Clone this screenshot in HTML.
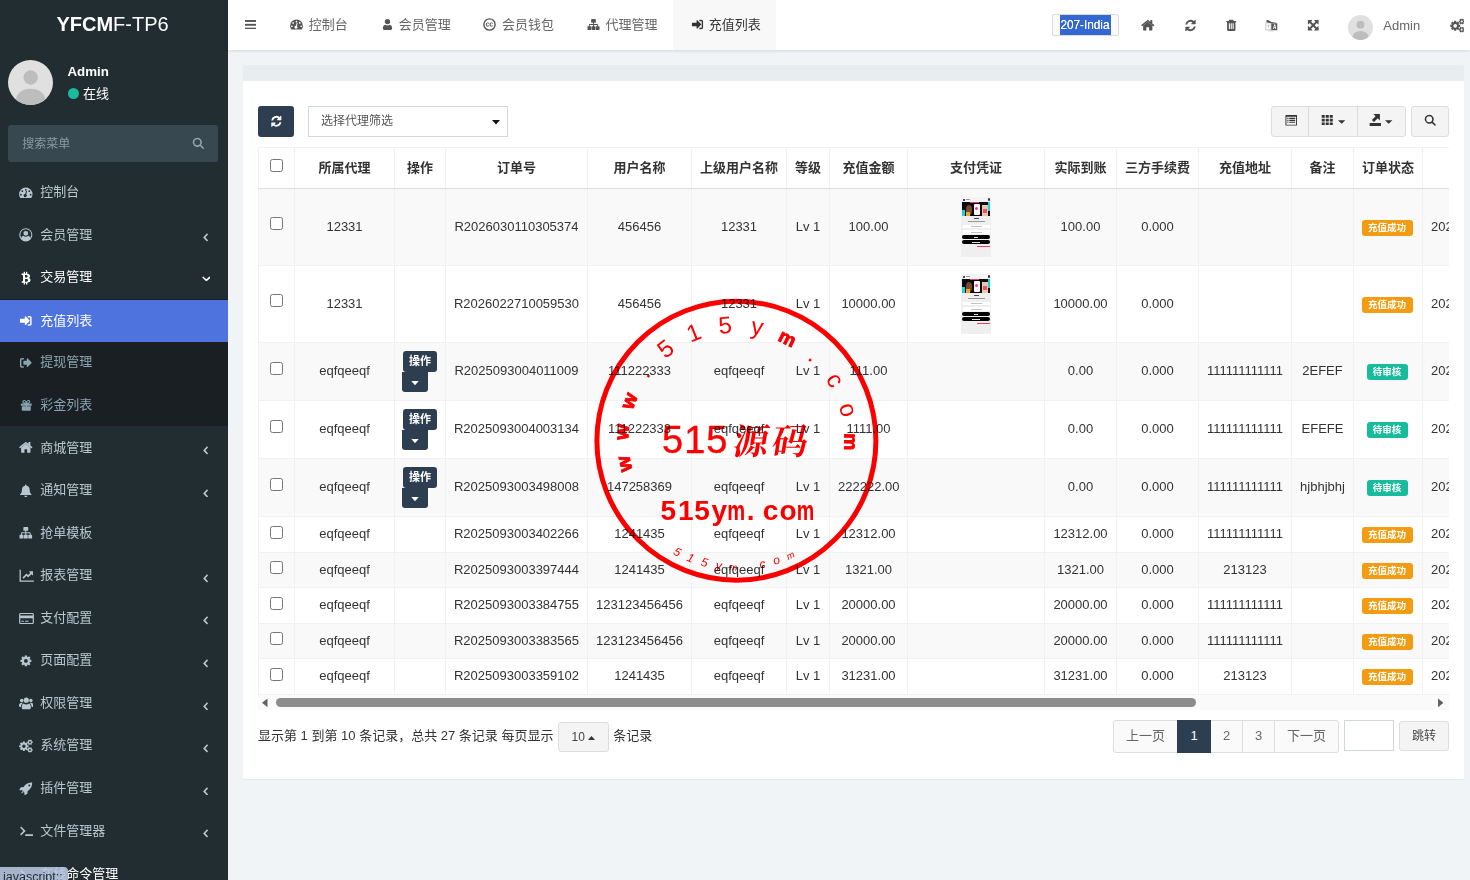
<!DOCTYPE html>
<html lang="zh-CN"><head><meta charset="utf-8"><title>充值列表</title>
<style>
*{box-sizing:border-box}
html,body{margin:0;padding:0}
body{width:1470px;height:880px;overflow:hidden;position:relative;background:#f1f4f6;font-family:"Liberation Sans","Noto Sans CJK SC",sans-serif;font-size:13px;color:#333;line-height:1.42857}
.abs{position:absolute}
.t{position:absolute;white-space:nowrap;line-height:1}
#sidebar{position:absolute;left:0;top:0;width:228px;height:880px;background:#222d32;overflow:hidden}
#header{position:absolute;left:228px;top:0;width:1242px;height:50px;background:#fff;box-shadow:0 1px 3px rgba(0,0,0,.12)}
.mi{position:absolute;left:40.2px;font-size:13px;color:#b8c7ce;white-space:nowrap;line-height:18.57px}
.tab{position:absolute;top:-0.4px;height:50px;font-size:13px;color:#666;white-space:nowrap;line-height:50px}
#card{position:absolute;left:243px;top:65px;width:1221px;height:714px;background:#fff;border-radius:2px;box-shadow:0 1px 1px rgba(0,0,0,.05)}
#cardhead{position:absolute;left:0;top:0;width:1221px;height:16px;background:#e8edf0;border-radius:1px 1px 0 0}
#tw{position:absolute;left:257.5px;top:147px;width:1191.5px;height:547.5px;overflow:hidden}
table{border-collapse:collapse;table-layout:fixed;width:1305px;font-size:13px;color:#333}
td,th{border:1px solid #f1f1f1;padding:0 8px;text-align:center;vertical-align:middle;white-space:nowrap;overflow:hidden}
th{font-weight:bold;height:41px;border-bottom:1px solid #ddd;border-top:1px solid #f1f1f1}
tr.o td{background:#f9f9f9}
tr.r77 td{height:77px}
tr.r76 td{height:77px}
tr.r58 td{height:58px}
tr.r35 td{height:35.57px}
.cb{display:inline-block;width:13px;height:13px;border:1px solid #767676;border-radius:2.5px;background:#fff;vertical-align:middle;position:relative;top:-2.5px}
.lab{display:inline-block;font-size:9.5px;font-weight:bold;color:#fff;border-radius:3px;height:16px;line-height:16px;position:relative;top:0.2px;left:-0.9px}
.lo{background:#f39c12;width:51px}
.lg{background:#18bc9c;width:41px;top:-0.5px}
tr.r58 .cb,tr.r77 .cb,tr.r76 .cb{top:-3.3px}
.pg{position:absolute;top:720px;height:32.5px;border:1px solid #ddd;background:#fafafa;color:#666;font-size:13px;text-align:center;line-height:30.5px}
</style></head><body>

<div id="sidebar">
<div class="t" style="left:0;width:228px;top:13.1px;text-align:center;font-size:20px;color:#fff;line-height:22px;padding-right:3px"><b>YFCM</b>F-TP6</div>
<svg class="abs" style="left:7.7px;top:59.9px;border-radius:50%;overflow:hidden;background:#e0e0e0" width="45.4" height="45.4" viewBox="0 0 48 48"><g fill="#bdbdbd"><circle cx="24" cy="18.5" r="7.6"/><ellipse cx="24" cy="42" rx="15.5" ry="11.5"/></g></svg>
<div class="t" style="left:67.5px;top:63.6px;font-size:13.3px;font-weight:bold;color:#fff;line-height:16px">Admin</div>
<div class="abs" style="left:67.6px;top:87.7px;width:11.6px;height:11.6px;border-radius:50%;background:#1abc9c"></div>
<div class="t" style="left:83px;top:84.5px;font-size:13px;color:#fff;line-height:18px">在线</div>
<div class="abs" style="left:7.7px;top:125.2px;width:210.3px;height:36.8px;background:#374850;border-radius:3px"></div>
<div class="t" style="left:22.2px;top:134.6px;font-size:12px;color:#8c99a0;line-height:18px">搜索菜单</div>
<svg style="position:absolute;left:192.2px;top:136.9px;" width="12.8" height="12.8" viewBox="0 0 14 14" fill="#9aa3a8"><path fill-rule="evenodd" d="M5.8.8a5 5 0 0 1 4.1 7.9l3 3c.3.3.3.8 0 1.1l-.1.1c-.3.3-.8.3-1.1 0l-3-3A5 5 0 1 1 5.8.8zm0 1.7a3.3 3.3 0 1 0 0 6.6 3.3 3.3 0 0 0 0-6.6z"/></svg>
<div class="abs" style="left:0;top:299px;width:228px;height:127.3px;background:#191f23"></div>
<div class="abs" style="left:0;top:300px;width:228px;height:41.8px;background:#4e73df"></div>
<svg style="position:absolute;left:19.4px;top:185.7px;" width="13.6" height="13.6" viewBox="0 0 14 14" fill="#b8c7ce"><path fill-rule="evenodd" d="M7 1.6A6.9 6.9 0 0 0 .1 8.5c0 1.3.4 2.6 1.1 3.6.1.2.3.3.5.3h10.6c.2 0 .4-.1.5-.3.7-1 1.1-2.3 1.1-3.6A6.9 6.9 0 0 0 7 1.6zM7 3a.9.9 0 1 1 0 1.8A.9.9 0 0 1 7 3zM3.4 4.4a.9.9 0 1 1 0 1.8.9.9 0 0 1 0-1.8zM2 8a.9.9 0 1 1 0 1.8A.9.9 0 0 1 2 8zM12 8a.9.9 0 1 1 0 1.8A.9.9 0 0 1 12 8zM10.6 4.4a.9.9 0 1 1 0 1.8.9.9 0 0 1 0-1.8zM8.3 5.3l-.9 3.3a1.6 1.6 0 1 1-1-.3l.9-3.3z"/></svg>
<div class="mi" style="top:183.1px;color:#b8c7ce">控制台</div>
<svg style="position:absolute;left:19.4px;top:228.3px;" width="13.6" height="13.6" viewBox="0 0 14 14" fill="#b8c7ce"><path fill-rule="evenodd" d="M7 .2a6.8 6.8 0 1 0 0 13.6A6.8 6.8 0 0 0 7 .2zm0 1.1a5.7 5.7 0 0 1 4.6 9.1c-.3-1.3-.9-2.2-2.2-2.4-.6.6-1.5 1-2.4 1s-1.8-.4-2.4-1c-1.3.2-1.9 1.1-2.2 2.4A5.7 5.7 0 0 1 7 1.3zM7 3a2.5 2.5 0 1 0 0 5 2.5 2.5 0 0 0 0-5z"/></svg>
<div class="mi" style="top:225.7px;color:#b8c7ce">会员管理</div>
<svg class="abs" style="left:202.8px;top:233.4px" width="5.6" height="8.8" viewBox="0 0 7 11" fill="none" stroke="#b8c7ce" stroke-width="2"><path d="M5.7 1L1.5 5.5l4.2 4.5"/></svg>
<svg style="position:absolute;left:19.1px;top:270.5px;" width="14.2" height="14.2" viewBox="0 0 14 14" fill="#fff"><path fill-rule="evenodd" d="M4.6.8h1.3v1.7h1V.8h1.3v1.8c1.6.2 2.7.9 2.7 2.3 0 1-.5 1.6-1.3 1.9 1.1.3 1.8 1 1.8 2.2 0 1.7-1.3 2.4-3.2 2.5v1.7H6.9v-1.7h-1v1.7H4.6v-1.7H2.5l.3-1.5h.8c.3 0 .4-.1.4-.4V4.4c0-.3-.2-.5-.6-.5h-.9V2.5h2.1zm1.3 3.2v2.4h.9c1 0 1.8-.3 1.8-1.2S7.8 4 6.8 4zm0 3.8V10.5h1.1c1.2 0 2-.4 2-1.3 0-1-.8-1.4-2-1.4z"/></svg>
<div class="mi" style="top:268.2px;color:#fff">交易管理</div>
<svg class="abs" style="left:201.6px;top:275.9px" width="8.8" height="5.6" viewBox="0 0 11 7" fill="none" stroke="#fff" stroke-width="2"><path d="M1 1.3l4.5 4.2L10 1.3"/></svg>
<svg style="position:absolute;left:19.4px;top:314.1px;" width="13.6" height="13.6" viewBox="0 0 14 14" fill="#fff"><path d="M6 2.8c0-.4.5-.7.8-.4l4 4c.3.3.3.7 0 1l-4 4c-.3.3-.8 0-.8-.4V9H1.5C1.2 9 1 8.8 1 8.5v-3c0-.3.2-.5.5-.5H6zM9.3 2h1.9C12.2 2 13 2.8 13 3.8v6.4c0 1-.8 1.8-1.8 1.8H9.3c-.2 0-.3-.1-.3-.3v-.9c0-.2.1-.3.3-.3h1.9c.2 0 .3-.1.3-.3V3.8c0-.2-.1-.3-.3-.3H9.3c-.2 0-.3-.1-.3-.3v-.9c0-.2.1-.3.3-.3z"/></svg>
<div class="mi" style="top:311.5px;color:#fff">充值列表</div>
<svg style="position:absolute;left:19.4px;top:355.9px;" width="13.6" height="13.6" viewBox="0 0 14 14" fill="#8aa4af"><path d="M8 2.8c0-.4.5-.7.8-.4l4 4c.3.3.3.7 0 1l-4 4c-.3.3-.8 0-.8-.4V9H5c-.3 0-.5-.2-.5-.5v-3c0-.3.2-.5.5-.5h3zM4.7 2H2.8C1.8 2 1 2.8 1 3.8v6.4c0 1 .8 1.8 1.8 1.8h1.9c.2 0 .3-.1.3-.3v-.9c0-.2-.1-.3-.3-.3H2.8c-.2 0-.3-.1-.3-.3V3.8c0-.2.1-.3.3-.3h1.9c.2 0 .3-.1.3-.3v-.9C5 2.1 4.9 2 4.7 2z"/></svg>
<div class="mi" style="top:353.3px;color:#8aa4af">提现管理</div>
<svg style="position:absolute;left:19.9px;top:399.0px;" width="12.6" height="12.6" viewBox="0 0 14 14" fill="#8aa4af"><path d="M1 5h12v2.5H1zM2 8h4.3v5H2.8c-.4 0-.8-.3-.8-.8zM7.7 8H12v4.2c0 .5-.4.8-.8.8H7.7zM6.3 5h1.4v8H6.3zM4.6 1c1 0 1.8.7 2.4 1.7C7.6 1.7 8.4 1 9.4 1c1.2 0 2 .8 2 1.9 0 1.2-1 2.1-2.3 2.1H4.9C3.6 5 2.6 4.1 2.6 2.9c0-1.1.8-1.9 2-1.9zm.1 1.3c-.5 0-.8.3-.8.7 0 .5.4.8.9.8h1.5c-.3-.8-.9-1.5-1.6-1.5zm4.6 0c-.7 0-1.3.7-1.6 1.5h1.5c.5 0 .9-.3.9-.8 0-.4-.3-.7-.8-.7z"/></svg>
<div class="mi" style="top:395.9px;color:#8aa4af">彩金列表</div>
<svg style="position:absolute;left:19.4px;top:441.1px;" width="13.6" height="13.6" viewBox="0 0 14 14" fill="#b8c7ce"><path d="M7 2.9l4.8 4v4.6c0 .3-.2.5-.5.5H8.4V8.5H5.6V12H2.7c-.3 0-.5-.2-.5-.5V6.9zM13.7 6.7l-.6.7c-.1.1-.3.1-.4 0L7 2.7 1.3 7.4c-.1.1-.3.1-.4 0l-.6-.7c-.1-.1-.1-.3 0-.4L6.4 1.2c.3-.3.9-.3 1.2 0l2.1 1.7V1.3c0-.2.1-.3.3-.3h1.4c.2 0 .3.1.3.3v3.3l2 1.7c.1.1.1.3 0 .4z"/></svg>
<div class="mi" style="top:438.5px;color:#b8c7ce">商城管理</div>
<svg class="abs" style="left:202.8px;top:446.2px" width="5.6" height="8.8" viewBox="0 0 7 11" fill="none" stroke="#b8c7ce" stroke-width="2"><path d="M5.7 1L1.5 5.5l4.2 4.5"/></svg>
<svg style="position:absolute;left:19.4px;top:483.6px;" width="13.6" height="13.6" viewBox="0 0 14 14" fill="#b8c7ce"><path d="M7 .5c.5 0 .8.3.8.8v.4c2 .4 3.2 2 3.2 4.1 0 2.6.9 3.9 1.9 4.7.3.3.1.9-.4.9H1.5c-.5 0-.7-.6-.4-.9 1-.8 1.9-2.1 1.9-4.7 0-2.1 1.2-3.7 3.2-4.1v-.4c0-.5.3-.8.8-.8zM5.4 12h3.2c0 .9-.7 1.6-1.6 1.6S5.4 12.9 5.4 12z"/></svg>
<div class="mi" style="top:481.0px;color:#b8c7ce">通知管理</div>
<svg class="abs" style="left:202.8px;top:488.7px" width="5.6" height="8.8" viewBox="0 0 7 11" fill="none" stroke="#b8c7ce" stroke-width="2"><path d="M5.7 1L1.5 5.5l4.2 4.5"/></svg>
<svg style="position:absolute;left:19.4px;top:526.2px;" width="13.6" height="13.6" viewBox="0 0 14 14" fill="#b8c7ce"><path d="M5 1h4c.3 0 .5.2.5.5v3c0 .3-.2.5-.5.5H7.5v1.5H11c.6 0 1 .4 1 1V9h1c.3 0 .5.2.5.5v3c0 .3-.2.5-.5.5h-3c-.3 0-.5-.2-.5-.5v-3c0-.3.2-.5.5-.5h1V7.5H7.5V9h1c.3 0 .5.2.5.5v3c0 .3-.2.5-.5.5h-3c-.3 0-.5-.2-.5-.5v-3c0-.3.2-.5.5-.5h1V7.5H3V9h1c.3 0 .5.2.5.5v3c0 .3-.2.5-.5.5H1c-.3 0-.5-.2-.5-.5v-3C.5 9.2.7 9 1 9h1V7.5c0-.6.4-1 1-1h3.5V5H5c-.3 0-.5-.2-.5-.5v-3c0-.3.2-.5.5-.5z"/></svg>
<div class="mi" style="top:523.6px;color:#b8c7ce">抢单模板</div>
<svg style="position:absolute;left:18.6px;top:567.9px;" width="15.2" height="15.2" viewBox="0 0 14 14" fill="#b8c7ce"><path d="M.5 1.5h1.2v10h12v1.2H.5zM12.9 3.2v3.3c0 .3-.3.4-.5.2l-1-1-2.8 2.8c-.1.1-.3.1-.4 0L6.9 7.2 4.3 9.8 3.2 8.7l3.5-3.5c.1-.1.3-.1.4 0l1.3 1.3 2-2-1-1c-.2-.2-.1-.5.2-.5h3.1c.1 0 .2.1.2.2z"/></svg>
<div class="mi" style="top:566.1px;color:#b8c7ce">报表管理</div>
<svg class="abs" style="left:202.8px;top:573.8px" width="5.6" height="8.8" viewBox="0 0 7 11" fill="none" stroke="#b8c7ce" stroke-width="2"><path d="M5.7 1L1.5 5.5l4.2 4.5"/></svg>
<svg style="position:absolute;left:18.7px;top:610.6px;" width="15.0" height="15.0" viewBox="0 0 14 14" fill="#b8c7ce"><path fill-rule="evenodd" d="M1.5 1.8h11c.8 0 1.4.6 1.4 1.4v7.6c0 .8-.6 1.4-1.4 1.4h-11c-.8 0-1.4-.6-1.4-1.4V3.2c0-.8.6-1.4 1.4-1.4zm0 1.1c-.2 0-.3.1-.3.3V4.3h11.6V3.2c0-.2-.1-.3-.3-.3zM1.2 6.7v4.1c0 .2.1.3.3.3h11c.2 0 .3-.1.3-.3V6.7zM2.3 9h2.2v1.1H2.3zm3.3 0h3.3v1.1H5.6z"/></svg>
<div class="mi" style="top:608.7px;color:#b8c7ce">支付配置</div>
<svg class="abs" style="left:202.8px;top:616.4px" width="5.6" height="8.8" viewBox="0 0 7 11" fill="none" stroke="#b8c7ce" stroke-width="2"><path d="M5.7 1L1.5 5.5l4.2 4.5"/></svg>
<svg style="position:absolute;left:20.3px;top:654.8px;" width="11.8" height="11.8" viewBox="0 0 14 14" fill="#b8c7ce"><path fill-rule="evenodd" d="M11.78 5.55 L13.47 5.71 L13.47 8.29 L11.78 8.45 L11.41 9.36 L12.49 10.67 L10.67 12.49 L9.36 11.41 L8.45 11.78 L8.29 13.47 L5.71 13.47 L5.55 11.78 L4.64 11.41 L3.33 12.49 L1.51 10.67 L2.59 9.36 L2.22 8.45 L0.53 8.29 L0.53 5.71 L2.22 5.55 L2.59 4.64 L1.51 3.33 L3.33 1.51 L4.64 2.59 L5.55 2.22 L5.71 0.53 L8.29 0.53 L8.45 2.22 L9.36 2.59 L10.67 1.51 L12.49 3.33 L11.41 4.64Z M4.7 7.00 a2.3 2.3 0 1 0 4.6 0 a2.3 2.3 0 1 0 -4.6 0Z"/></svg>
<div class="mi" style="top:651.3px;color:#b8c7ce">页面配置</div>
<svg class="abs" style="left:202.8px;top:659.0px" width="5.6" height="8.8" viewBox="0 0 7 11" fill="none" stroke="#b8c7ce" stroke-width="2"><path d="M5.7 1L1.5 5.5l4.2 4.5"/></svg>
<svg style="position:absolute;left:18.9px;top:695.9px;" width="14.6" height="14.6" viewBox="0 0 14 14" fill="#b8c7ce"><path d="M7 6.5A2.5 2.5 0 1 0 7 1.5a2.5 2.5 0 0 0 0 5zM2.6 6A1.7 1.7 0 1 0 2.6 2.6 1.7 1.7 0 0 0 2.6 6zM11.4 6a1.7 1.7 0 1 0 0-3.4 1.7 1.7 0 0 0 0 3.4zM4.3 7.2C3.2 7.6 2.7 8.8 2.7 10.4v1.1c0 .8.6 1.3 1.4 1.3h5.8c.8 0 1.4-.5 1.4-1.3v-1.1c0-1.6-.5-2.8-1.6-3.2-.7.6-1.7 1-2.7 1s-2-.4-2.7-1zM3.6 6.7C3.3 6.6 3 6.5 2.6 6.5 1 6.5 0 7.6 0 9v.6c0 .5.4.9.9.9h1c0-1.5.5-3 1.7-3.8zM10.4 6.7c1.2.8 1.7 2.3 1.7 3.8h1c.5 0 .9-.4.9-.9V9c0-1.4-1-2.5-2.6-2.5-.4 0-.7.1-1 .2z"/></svg>
<div class="mi" style="top:693.8px;color:#b8c7ce">权限管理</div>
<svg class="abs" style="left:202.8px;top:701.5px" width="5.6" height="8.8" viewBox="0 0 7 11" fill="none" stroke="#b8c7ce" stroke-width="2"><path d="M5.7 1L1.5 5.5l4.2 4.5"/></svg>
<svg style="position:absolute;left:19.4px;top:739.0px;" width="13.6" height="13.6" viewBox="0 0 14 14" fill="#b8c7ce"><path fill-rule="evenodd" d="M8.54 6.43 L9.81 6.54 L9.81 8.46 L8.54 8.57 L8.26 9.24 L9.07 10.22 L7.72 11.57 L6.74 10.76 L6.07 11.04 L5.96 12.31 L4.04 12.31 L3.93 11.04 L3.26 10.76 L2.28 11.57 L0.93 10.22 L1.74 9.24 L1.46 8.57 L0.19 8.46 L0.19 6.54 L1.46 6.43 L1.74 5.76 L0.93 4.78 L2.28 3.43 L3.26 4.24 L3.93 3.96 L4.04 2.69 L5.96 2.69 L6.07 3.96 L6.74 4.24 L7.72 3.43 L9.07 4.78 L8.26 5.76Z M3.2 7.5 a1.8 1.8 0 1 0 3.6 0 a1.8 1.8 0 1 0 -3.6 0Z M13.24 2.6 L14.1 2.65 L14.1 4.15 L13.24 4.2 L12.97 4.68 L13.35 5.45 L12.05 6.2 L11.57 5.48 L11.03 5.48 L10.55 6.2 L9.25 5.45 L9.63 4.68 L9.36 4.2 L8.5 4.15 L8.5 2.65 L9.36 2.6 L9.63 2.12 L9.25 1.35 L10.55 0.6 L11.03 1.32 L11.57 1.32 L12.05 0.6 L13.35 1.35 L12.97 2.12Z M10.3 3.4 a1.00 1.00 0 1 0 2.00 0 a1.00 1.00 0 1 0 -2.00 0Z M13.24 10.4 L14.1 10.45 L14.1 11.95 L13.24 12.00 L12.97 12.48 L13.35 13.25 L12.05 14.00 L11.57 13.28 L11.03 13.28 L10.55 14.00 L9.25 13.25 L9.63 12.48 L9.36 12.00 L8.5 11.95 L8.5 10.45 L9.36 10.4 L9.63 9.92 L9.25 9.15 L10.55 8.4 L11.03 9.12 L11.57 9.12 L12.05 8.4 L13.35 9.15 L12.97 9.92Z M10.3 11.2 a1.00 1.00 0 1 0 2.00 0 a1.00 1.00 0 1 0 -2.00 0Z"/></svg>
<div class="mi" style="top:736.4px;color:#b8c7ce">系统管理</div>
<svg class="abs" style="left:202.8px;top:744.1px" width="5.6" height="8.8" viewBox="0 0 7 11" fill="none" stroke="#b8c7ce" stroke-width="2"><path d="M5.7 1L1.5 5.5l4.2 4.5"/></svg>
<svg style="position:absolute;left:19.4px;top:781.5px;" width="13.6" height="13.6" viewBox="0 0 14 14" fill="#b8c7ce"><path fill-rule="evenodd" d="M13.5.5c.2 2.8-.7 5.3-2.9 7.4-.5.5-1.1.9-1.7 1.3l-.2 2.5c0 .2-.1.3-.2.4l-2.3 1.4c-.3.2-.6 0-.6-.3l-.1-2.5-2.2-2.2-2.5-.1c-.3 0-.5-.3-.3-.6l1.4-2.3c.1-.1.2-.2.4-.2l2.5-.2c.4-.6.8-1.2 1.3-1.7C8.2 1.2 10.7.3 13.5.5zM10.6 2.5a1 1 0 1 0 0 2 1 1 0 0 0 0-2zM3.4 9.3l1.3 1.3-2.6 1.3z"/></svg>
<div class="mi" style="top:778.9px;color:#b8c7ce">插件管理</div>
<svg class="abs" style="left:202.8px;top:786.6px" width="5.6" height="8.8" viewBox="0 0 7 11" fill="none" stroke="#b8c7ce" stroke-width="2"><path d="M5.7 1L1.5 5.5l4.2 4.5"/></svg>
<svg style="position:absolute;left:18.9px;top:823.7px;" width="14.5" height="14.5" viewBox="0 0 14 14" fill="#b8c7ce"><path d="M1.2 3.3l.7-.7c.1-.1.3-.1.4 0l3.9 3.9c.1.1.1.3 0 .4L2.3 10.8c-.1.1-.3.1-.4 0l-.7-.7c-.1-.1-.1-.3 0-.4l3-3-3-3c-.1-.1-.1-.3 0-.4zM6.3 10h7c.2 0 .3.1.3.3v.9c0 .2-.1.3-.3.3h-7c-.2 0-.3-.1-.3-.3v-.9c0-.2.1-.3.3-.3z"/></svg>
<div class="mi" style="top:821.5px;color:#b8c7ce">文件管理器</div>
<svg class="abs" style="left:202.8px;top:829.2px" width="5.6" height="8.8" viewBox="0 0 7 11" fill="none" stroke="#b8c7ce" stroke-width="2"><path d="M5.7 1L1.5 5.5l4.2 4.5"/></svg>
<svg style="position:absolute;left:18.9px;top:867.2px;" width="14.5" height="14.5" viewBox="0 0 14 14" fill="#fff"><path d="M1.2 3.3l.7-.7c.1-.1.3-.1.4 0l3.9 3.9c.1.1.1.3 0 .4L2.3 10.8c-.1.1-.3.1-.4 0l-.7-.7c-.1-.1-.1-.3 0-.4l3-3-3-3c-.1-.1-.1-.3 0-.4zM6.3 10h7c.2 0 .3.1.3.3v.9c0 .2-.1.3-.3.3h-7c-.2 0-.3-.1-.3-.3v-.9c0-.2.1-.3.3-.3z"/></svg>
<div class="mi" style="top:865.1px;color:#fff">在线命令管理</div>
<div class="abs" style="left:-3px;top:867px;width:71px;height:16px;background:#b5c3dc;border-radius:0 4px 0 0;opacity:.9"></div>
<div class="t" style="left:3px;top:870px;font-size:12.5px;color:#1f2a33;line-height:14px">javascript:;</div>
</div>
<div id="header">
<svg class="abs" style="left:16.7px;top:19.5px" width="11.6" height="9.6" viewBox="0 0 11.6 9.6" fill="#555"><rect x="0" y="0" width="11.6" height="1.9"/><rect x="0" y="3.85" width="11.6" height="1.9"/><rect x="0" y="7.7" width="11.6" height="1.9"/></svg>
<div class="abs" style="left:445.0px;top:0;width:103.3px;height:50px;background:#f8f8f8"></div>
<svg style="position:absolute;left:61.7px;top:18.3px;" width="13.0" height="13.0" viewBox="0 0 14 14" fill="#555"><path fill-rule="evenodd" d="M7 1.6A6.9 6.9 0 0 0 .1 8.5c0 1.3.4 2.6 1.1 3.6.1.2.3.3.5.3h10.6c.2 0 .4-.1.5-.3.7-1 1.1-2.3 1.1-3.6A6.9 6.9 0 0 0 7 1.6zM7 3a.9.9 0 1 1 0 1.8A.9.9 0 0 1 7 3zM3.4 4.4a.9.9 0 1 1 0 1.8.9.9 0 0 1 0-1.8zM2 8a.9.9 0 1 1 0 1.8A.9.9 0 0 1 2 8zM12 8a.9.9 0 1 1 0 1.8A.9.9 0 0 1 12 8zM10.6 4.4a.9.9 0 1 1 0 1.8.9.9 0 0 1 0-1.8zM8.3 5.3l-.9 3.3a1.6 1.6 0 1 1-1-.3l.9-3.3z"/></svg>
<div class="tab" style="left:80.8px;color:#666">控制台</div>
<svg style="position:absolute;left:152.5px;top:18.3px;" width="13.0" height="13.0" viewBox="0 0 14 14" fill="#555"><path d="M7 6.8a2.9 2.9 0 1 0 0-5.8 2.9 2.9 0 0 0 0 5.8zM9.3 7.2c-.7.5-1.4.8-2.3.8s-1.6-.3-2.3-.8C2.7 7.5 2 9.3 2 11.1 2 12.3 2.8 13 3.9 13h6.2c1.1 0 1.9-.7 1.9-1.9 0-1.8-.7-3.6-2.7-3.9z"/></svg>
<div class="tab" style="left:170.8px;color:#666">会员管理</div>
<svg style="position:absolute;left:255.4px;top:18.3px;" width="13.0" height="13.0" viewBox="0 0 14 14" fill="#555"><path fill-rule="evenodd" d="M7 .2a6.8 6.8 0 1 0 0 13.6A6.8 6.8 0 0 0 7 .2zm0 1.5a5.3 5.3 0 1 1 0 10.6A5.3 5.3 0 0 1 7 1.7zM5.3 4.8C4 4.8 3 5.7 3 7s1 2.2 2.3 2.2c.8 0 1.4-.4 1.7-.9l-.8-.5c-.2.3-.5.5-.9.5-.7 0-1.1-.5-1.1-1.3s.4-1.3 1.1-1.3c.4 0 .7.2.8.5l.9-.5c-.3-.6-.9-.9-1.7-.9zm4 0C8 4.8 7 5.7 7 7s1 2.2 2.3 2.2c.8 0 1.4-.4 1.7-.9l-.8-.5c-.2.3-.5.5-.9.5-.7 0-1.1-.5-1.1-1.3s.4-1.3 1.1-1.3c.4 0 .7.2.8.5l.9-.5c-.3-.6-.9-.9-1.7-.9z"/></svg>
<div class="tab" style="left:274.0px;color:#666">会员钱包</div>
<svg style="position:absolute;left:358.7px;top:18.3px;" width="13.0" height="13.0" viewBox="0 0 14 14" fill="#555"><path d="M5 1h4c.3 0 .5.2.5.5v3c0 .3-.2.5-.5.5H7.5v1.5H11c.6 0 1 .4 1 1V9h1c.3 0 .5.2.5.5v3c0 .3-.2.5-.5.5h-3c-.3 0-.5-.2-.5-.5v-3c0-.3.2-.5.5-.5h1V7.5H7.5V9h1c.3 0 .5.2.5.5v3c0 .3-.2.5-.5.5h-3c-.3 0-.5-.2-.5-.5v-3c0-.3.2-.5.5-.5h1V7.5H3V9h1c.3 0 .5.2.5.5v3c0 .3-.2.5-.5.5H1c-.3 0-.5-.2-.5-.5v-3C.5 9.2.7 9 1 9h1V7.5c0-.6.4-1 1-1h3.5V5H5c-.3 0-.5-.2-.5-.5v-3c0-.3.2-.5.5-.5z"/></svg>
<div class="tab" style="left:377.5px;color:#666">代理管理</div>
<svg style="position:absolute;left:462.5px;top:18.3px;" width="13.0" height="13.0" viewBox="0 0 14 14" fill="#333"><path d="M6 2.8c0-.4.5-.7.8-.4l4 4c.3.3.3.7 0 1l-4 4c-.3.3-.8 0-.8-.4V9H1.5C1.2 9 1 8.8 1 8.5v-3c0-.3.2-.5.5-.5H6zM9.3 2h1.9C12.2 2 13 2.8 13 3.8v6.4c0 1-.8 1.8-1.8 1.8H9.3c-.2 0-.3-.1-.3-.3v-.9c0-.2.1-.3.3-.3h1.9c.2 0 .3-.1.3-.3V3.8c0-.2-.1-.3-.3-.3H9.3c-.2 0-.3-.1-.3-.3v-.9c0-.2.1-.3.3-.3z"/></svg>
<div class="tab" style="left:480.8px;color:#333">充值列表</div>
<div class="abs" style="left:824.2px;top:14.3px;width:66.6px;height:21.6px;border:1px solid #dadada;border-radius:2px;background:#fafafa"></div>
<div class="abs" style="left:832.0px;top:15px;width:51px;height:19.7px;background:#3367d1"></div>
<div class="t" style="left:827.4px;top:17.2px;width:60px;text-align:center;font-size:13.3px;color:#fff;line-height:16px;transform:scaleX(.885);transform-origin:30px 0;text-shadow:0 0 .4px #fff">207-India</div>
<svg style="position:absolute;left:913.2px;top:19.1px;" width="13.5" height="13.5" viewBox="0 0 14 14" fill="#555"><path d="M7 2.9l4.8 4v4.6c0 .3-.2.5-.5.5H8.4V8.5H5.6V12H2.7c-.3 0-.5-.2-.5-.5V6.9zM13.7 6.7l-.6.7c-.1.1-.3.1-.4 0L7 2.7 1.3 7.4c-.1.1-.3.1-.4 0l-.6-.7c-.1-.1-.1-.3 0-.4L6.4 1.2c.3-.3.9-.3 1.2 0l2.1 1.7V1.3c0-.2.1-.3.3-.3h1.4c.2 0 .3.1.3.3v3.3l2 1.7c.1.1.1.3 0 .4z"/></svg>
<svg style="position:absolute;left:955.7px;top:18.7px;" width="13.0" height="13.0" viewBox="0 0 14 14" fill="#555"><path d="M12.6 1.3v3.9c0 .3-.2.5-.5.5H8.2c-.4 0-.6-.5-.3-.8l1.2-1.2A3.6 3.6 0 0 0 3.5 6H1.4A5.7 5.7 0 0 1 10.6 2.2l1.2-1.2c.3-.3.8-.1.8.3zM1.4 12.7V8.8c0-.3.2-.5.5-.5h3.9c.4 0 .6.5.3.8L4.9 10.3A3.6 3.6 0 0 0 10.5 8h2.1a5.7 5.7 0 0 1-9.2 3.8L2.2 13c-.3.3-.8.1-.8-.3z"/></svg>
<svg style="position:absolute;left:996.8px;top:18.9px;" width="12.5" height="12.5" viewBox="0 0 14 14" fill="#555"><path fill-rule="evenodd" d="M5.2.8h3.6c.2 0 .4.1.5.3l.4 1h2.6c.2 0 .3.1.3.3v.8c0 .2-.1.3-.3.3h-.6v8.3c0 .9-.6 1.5-1.4 1.5H3.7c-.8 0-1.4-.6-1.4-1.5V3.5h-.6c-.2 0-.3-.1-.3-.3v-.8c0-.2.1-.3.3-.3h2.6l.4-1c.1-.2.3-.3.5-.3zM4.3 5v6c0 .2.1.3.3.3h.6c.2 0 .3-.1.3-.3V5c0-.2-.1-.3-.3-.3h-.6c-.2 0-.3.1-.3.3zm2.1 0v6c0 .2.1.3.3.3h.6c.2 0 .3-.1.3-.3V5c0-.2-.1-.3-.3-.3h-.6c-.2 0-.3.1-.3.3zm2.1 0v6c0 .2.1.3.3.3h.6c.2 0 .3-.1.3-.3V5c0-.2-.1-.3-.3-.3h-.6c-.2 0-.3.1-.3.3z"/></svg>
<svg style="position:absolute;left:1037.3px;top:18.7px;" width="13.0" height="13.0" viewBox="0 0 14 14" fill="#555"><path fill-rule="evenodd" opacity=".45" d="M.6 3.8h6.2v8.2H.6zM1.3 4.5v6.8h4.8V4.5zM2.6 6.2h2.4v.7h-.8v2.9h-.8V6.9h-.8zM3.6 12.7h4.8v.5H3.6z"/><path fill-rule="evenodd" d="M6.8 4.2h6.4v7.8H6.8zM8.7 10.8l1.2-5.2h1l1.2 5.2h-.9l-.25-1.2H9.85l-.25 1.2zM10 8.8h.8l-.4-1.9zM1.6 1h1.5l4 2.3 6.1.9v.4H6.6L1.6 3.6z"/></svg>
<svg style="position:absolute;left:1078.5px;top:18.9px;" width="12.5" height="12.5" viewBox="0 0 14 14" fill="#555"><path d="M8.5 1h4c.3 0 .5.2.5.5v4c0 .4-.5.6-.8.3l-1.2-1.2L8.6 7l2.4 2.4 1.2-1.2c.3-.3.8-.1.8.3v4c0 .3-.2.5-.5.5h-4c-.4 0-.6-.5-.3-.8l1.2-1.2L7 8.6 4.6 11l1.2 1.2c.3.3.1.8-.3.8h-4c-.3 0-.5-.2-.5-.5v-4c0-.4.5-.6.8-.3L3 9.4 5.4 7 3 4.6 1.8 5.8c-.3.3-.8.1-.8-.3v-4c0-.3.2-.5.5-.5h4c.4 0 .6.5.3.8L4.6 3 7 5.4 9.4 3 8.2 1.8c-.3-.3-.1-.8.3-.8z"/></svg>
<svg class="abs" style="left:1120.0px;top:14.8px;border-radius:50%;overflow:hidden;background:#e0e0e0" width="25.0" height="25.0" viewBox="0 0 48 48"><g fill="#bdbdbd"><circle cx="24" cy="18.5" r="7.6"/><ellipse cx="24" cy="42" rx="15.5" ry="11.5"/></g></svg>
<div class="t" style="left:1155.3px;top:18px;font-size:13px;color:#666;line-height:15px">Admin</div>
<svg style="position:absolute;left:1221.8px;top:18.1px;" width="14.5" height="14.5" viewBox="0 0 14 14" fill="#555"><path fill-rule="evenodd" d="M8.54 6.43 L9.81 6.54 L9.81 8.46 L8.54 8.57 L8.26 9.24 L9.07 10.22 L7.72 11.57 L6.74 10.76 L6.07 11.04 L5.96 12.31 L4.04 12.31 L3.93 11.04 L3.26 10.76 L2.28 11.57 L0.93 10.22 L1.74 9.24 L1.46 8.57 L0.19 8.46 L0.19 6.54 L1.46 6.43 L1.74 5.76 L0.93 4.78 L2.28 3.43 L3.26 4.24 L3.93 3.96 L4.04 2.69 L5.96 2.69 L6.07 3.96 L6.74 4.24 L7.72 3.43 L9.07 4.78 L8.26 5.76Z M3.2 7.5 a1.8 1.8 0 1 0 3.6 0 a1.8 1.8 0 1 0 -3.6 0Z M13.24 2.6 L14.1 2.65 L14.1 4.15 L13.24 4.2 L12.97 4.68 L13.35 5.45 L12.05 6.2 L11.57 5.48 L11.03 5.48 L10.55 6.2 L9.25 5.45 L9.63 4.68 L9.36 4.2 L8.5 4.15 L8.5 2.65 L9.36 2.6 L9.63 2.12 L9.25 1.35 L10.55 0.6 L11.03 1.32 L11.57 1.32 L12.05 0.6 L13.35 1.35 L12.97 2.12Z M10.3 3.4 a1.00 1.00 0 1 0 2.00 0 a1.00 1.00 0 1 0 -2.00 0Z M13.24 10.4 L14.1 10.45 L14.1 11.95 L13.24 12.00 L12.97 12.48 L13.35 13.25 L12.05 14.00 L11.57 13.28 L11.03 13.28 L10.55 14.00 L9.25 13.25 L9.63 12.48 L9.36 12.00 L8.5 11.95 L8.5 10.45 L9.36 10.4 L9.63 9.92 L9.25 9.15 L10.55 8.4 L11.03 9.12 L11.57 9.12 L12.05 8.4 L13.35 9.15 L12.97 9.92Z M10.3 11.2 a1.00 1.00 0 1 0 2.00 0 a1.00 1.00 0 1 0 -2.00 0Z"/></svg>
</div>
<div id="card"><div id="cardhead"></div></div>
<div class="abs" style="left:258px;top:106.2px;width:36px;height:30.4px;background:#2c3e50;border-radius:3px"></div>
<svg style="position:absolute;left:269.9px;top:115.0px;" width="12.6" height="12.6" viewBox="0 0 14 14" fill="#fff"><path d="M12.6 1.3v3.9c0 .3-.2.5-.5.5H8.2c-.4 0-.6-.5-.3-.8l1.2-1.2A3.6 3.6 0 0 0 3.5 6H1.4A5.7 5.7 0 0 1 10.6 2.2l1.2-1.2c.3-.3.8-.1.8.3zM1.4 12.7V8.8c0-.3.2-.5.5-.5h3.9c.4 0 .6.5.3.8L4.9 10.3A3.6 3.6 0 0 0 10.5 8h2.1a5.7 5.7 0 0 1-9.2 3.8L2.2 13c-.3.3-.8.1-.8-.3z"/></svg>
<div class="abs" style="left:308px;top:106.2px;width:200px;height:30.4px;border:1px solid #d2d6de;background:#fff"></div>
<div class="t" style="left:321px;top:113px;font-size:12px;color:#555;line-height:16px">选择代理筛选</div>
<svg class="abs" style="left:491.5px;top:119.5px" width="8" height="5" viewBox="0 0 8 5"><path d="M0 0h8L4 4.5z" fill="#111"/></svg>
<div class="abs" style="left:1271.3px;top:106.2px;width:134.4px;height:30.4px;border:1px solid #ddd;background:#f4f4f4;border-radius:3px"></div>
<div class="abs" style="left:1308px;top:106.2px;width:1px;height:30.4px;background:#ddd"></div>
<div class="abs" style="left:1357px;top:106.2px;width:1px;height:30.4px;background:#ddd"></div>
<div class="abs" style="left:1411.2px;top:106.2px;width:37.6px;height:30.4px;border:1px solid #ddd;background:#f4f4f4;border-radius:3px"></div>
<svg style="position:absolute;left:1284.5px;top:114.0px;" width="12.5" height="12.5" viewBox="0 0 14 14" fill="#333"><path fill-rule="evenodd" d="M1.2 1h11.6c.4 0 .7.3.7.7v10.6c0 .4-.3.7-.7.7H1.2c-.4 0-.7-.3-.7-.7V1.7c0-.4.3-.7.7-.7zm.4 2.2v8.7h10.8V3.2zM2.6 4.3h1.3v1.2H2.6zm2.2 0h6.6v1.2H4.8zM2.6 6.5h1.3v1.2H2.6zm2.2 0h6.6v1.2H4.8zM2.6 8.7h1.3v1.2H2.6zm2.2 0h6.6v1.2H4.8z"/></svg>
<svg style="position:absolute;left:1320.5px;top:114.2px;" width="12.5" height="12.5" viewBox="0 0 14 14" fill="#333"><path d="M.8 1.2h3.4v3H.8zM5.3 1.2h3.4v3H5.3zM9.8 1.2h3.4v3H9.8zM.8 5.3h3.4v3H.8zM5.3 5.3h3.4v3H5.3zM9.8 5.3h3.4v3H9.8zM.8 9.4h3.4v3H.8zM5.3 9.4h3.4v3H5.3zM9.8 9.4h3.4v3H9.8z"/></svg>
<svg class="abs" style="left:1337.6px;top:120px" width="7.4" height="4" viewBox="0 0 8 4"><path d="M0 0h8L4 4z" fill="#333"/></svg>
<svg style="position:absolute;left:1369.2px;top:114.0px;" width="12.5" height="12.5" viewBox="0 0 14 14" fill="#333"><path d="M5 0h7.2v7.2L9.8 4.8 5.6 9 3.2 6.6 7.4 2.4zM.7 10.2h12.7v3.2H.7z"/></svg>
<svg class="abs" style="left:1385.4px;top:120px" width="7.4" height="4" viewBox="0 0 8 4"><path d="M0 0h8L4 4z" fill="#333"/></svg>
<svg style="position:absolute;left:1423.9px;top:114.1px;" width="12.6" height="12.6" viewBox="0 0 14 14" fill="#333"><path fill-rule="evenodd" d="M5.8.8a5 5 0 0 1 4.1 7.9l3 3c.3.3.3.8 0 1.1l-.1.1c-.3.3-.8.3-1.1 0l-3-3A5 5 0 1 1 5.8.8zm0 1.7a3.3 3.3 0 1 0 0 6.6 3.3 3.3 0 0 0 0-6.6z"/></svg>
<div id="tw"><table><colgroup><col style="width:36.5px"><col style="width:100px"><col style="width:51px"><col style="width:142px"><col style="width:104px"><col style="width:95px"><col style="width:43px"><col style="width:78px"><col style="width:137px"><col style="width:72px"><col style="width:82px"><col style="width:93px"><col style="width:62px"><col style="width:69px"><col style="width:140.5px"></colgroup>
<thead><tr><th style="padding:0"><span class="cb"></span></th><th>所属代理</th><th>操作</th><th>订单号</th><th>用户名称</th><th style="padding:0">上级用户名称</th><th>等级</th><th>充值金额</th><th>支付凭证</th><th>实际到账</th><th style="padding:0">三方手续费</th><th>充值地址</th><th>备注</th><th>订单状态</th><th>创建时间</th></tr></thead><tbody>
<tr class="r76 o"><td style="padding:0"><span class="cb"></span></td><td>12331</td><td style="padding:0"></td><td style="padding:0">R2026030110305374</td><td style="padding:0">456456</td><td>12331</td><td>Lv 1</td><td>100.00</td><td style="padding:0"><div style="position:relative;width:30px;height:60px;background:#efefef;margin:0 auto;overflow:hidden"><div class="abs" style="left:0;top:0;width:30px;height:4.5px;background:#f4f4f4"></div><div class="abs" style="left:1.5px;top:1.5px;width:2px;height:2px;background:#446"></div><div class="abs" style="left:4.5px;top:2px;width:4px;height:1px;background:#999"></div><div class="abs" style="left:26.5px;top:1px;width:2.5px;height:2.5px;border-radius:50%;background:#333"></div><div class="abs" style="left:1px;top:4.5px;width:28px;height:14.3px;background:#0b0b0d"></div><div class="abs" style="left:1px;top:13px;width:3px;height:5.8px;background:#19d3e0"></div><div class="abs" style="left:26.5px;top:5px;width:2.5px;height:9px;background:#19d3e0"></div><div class="abs" style="left:9px;top:4.5px;width:9px;height:1.5px;background:#e8407a"></div><div class="abs" style="left:4.5px;top:7.5px;width:6.5px;height:10px;border-radius:45%;background:#7a4a2e"></div><div class="abs" style="left:4.5px;top:15px;width:4px;height:3.8px;background:#f5a623"></div><div class="abs" style="left:12.5px;top:7px;width:6px;height:11px;background:#fafafa;border-radius:1px"></div><div class="abs" style="left:14px;top:10px;width:3px;height:3px;border-radius:50%;background:#f0506e"></div><div class="abs" style="left:20.5px;top:7.5px;width:6px;height:11.3px;background:#e7c9a5"></div><div class="abs" style="left:22px;top:12px;width:3.5px;height:4px;background:#f0506e"></div><div class="abs" style="left:12.5px;top:21.3px;width:5px;height:1.2px;background:#444"></div><div class="abs" style="left:6.5px;top:24px;width:17px;height:1px;background:#999"></div><div class="abs" style="left:1.5px;top:27.6px;width:27.5px;height:3.9px;background:#fff"></div><div class="abs" style="left:9.5px;top:29.2px;width:11px;height:.8px;background:#b9c4d0"></div><div class="abs" style="left:1.5px;top:33.1px;width:27.5px;height:3.7px;background:#fff"></div><div class="abs" style="left:9.5px;top:34.6px;width:11px;height:.8px;background:#b9c4d0"></div><div class="abs" style="left:1px;top:38.3px;width:28px;height:3.6px;background:#000;border-radius:2px"></div><div class="abs" style="left:13px;top:39.8px;width:4px;height:.7px;background:#ddd"></div><div class="abs" style="left:1px;top:43.2px;width:28px;height:3.6px;background:#000;border-radius:2px"></div><div class="abs" style="left:11px;top:44.7px;width:8px;height:.7px;background:#ddd"></div><div class="abs" style="left:16px;top:48.5px;width:12.5px;height:1.2px;background:#f23d5c"></div></div></td><td>100.00</td><td>0.000</td><td style="padding:0"></td><td style="padding:0"></td><td style="padding:0"><span class="lab lo">充值成功</span></td><td style="text-align:left">2026-03-01 10:30:53</td></tr>
<tr class="r77"><td style="padding:0"><span class="cb"></span></td><td>12331</td><td style="padding:0"></td><td style="padding:0">R2026022710059530</td><td style="padding:0">456456</td><td>12331</td><td>Lv 1</td><td>10000.00</td><td style="padding:0"><div style="position:relative;width:30px;height:60px;background:#efefef;margin:0 auto;overflow:hidden"><div class="abs" style="left:0;top:0;width:30px;height:4.5px;background:#f4f4f4"></div><div class="abs" style="left:1.5px;top:1.5px;width:2px;height:2px;background:#446"></div><div class="abs" style="left:4.5px;top:2px;width:4px;height:1px;background:#999"></div><div class="abs" style="left:26.5px;top:1px;width:2.5px;height:2.5px;border-radius:50%;background:#333"></div><div class="abs" style="left:1px;top:4.5px;width:28px;height:14.3px;background:#0b0b0d"></div><div class="abs" style="left:1px;top:13px;width:3px;height:5.8px;background:#19d3e0"></div><div class="abs" style="left:26.5px;top:5px;width:2.5px;height:9px;background:#19d3e0"></div><div class="abs" style="left:9px;top:4.5px;width:9px;height:1.5px;background:#e8407a"></div><div class="abs" style="left:4.5px;top:7.5px;width:6.5px;height:10px;border-radius:45%;background:#7a4a2e"></div><div class="abs" style="left:4.5px;top:15px;width:4px;height:3.8px;background:#f5a623"></div><div class="abs" style="left:12.5px;top:7px;width:6px;height:11px;background:#fafafa;border-radius:1px"></div><div class="abs" style="left:14px;top:10px;width:3px;height:3px;border-radius:50%;background:#f0506e"></div><div class="abs" style="left:20.5px;top:7.5px;width:6px;height:11.3px;background:#e7c9a5"></div><div class="abs" style="left:22px;top:12px;width:3.5px;height:4px;background:#f0506e"></div><div class="abs" style="left:12.5px;top:21.3px;width:5px;height:1.2px;background:#444"></div><div class="abs" style="left:6.5px;top:24px;width:17px;height:1px;background:#999"></div><div class="abs" style="left:1.5px;top:27.6px;width:27.5px;height:3.9px;background:#fff"></div><div class="abs" style="left:9.5px;top:29.2px;width:11px;height:.8px;background:#b9c4d0"></div><div class="abs" style="left:1.5px;top:33.1px;width:27.5px;height:3.7px;background:#fff"></div><div class="abs" style="left:9.5px;top:34.6px;width:11px;height:.8px;background:#b9c4d0"></div><div class="abs" style="left:1px;top:38.3px;width:28px;height:3.6px;background:#000;border-radius:2px"></div><div class="abs" style="left:13px;top:39.8px;width:4px;height:.7px;background:#ddd"></div><div class="abs" style="left:1px;top:43.2px;width:28px;height:3.6px;background:#000;border-radius:2px"></div><div class="abs" style="left:11px;top:44.7px;width:8px;height:.7px;background:#ddd"></div><div class="abs" style="left:16px;top:48.5px;width:12.5px;height:1.2px;background:#f23d5c"></div></div></td><td>10000.00</td><td>0.000</td><td style="padding:0"></td><td style="padding:0"></td><td style="padding:0"><span class="lab lo">充值成功</span></td><td style="text-align:left">2026-02-27 10:05:09</td></tr>
<tr class="r58 o"><td style="padding:0"><span class="cb"></span></td><td>eqfqeeqf</td><td style="padding:0"><div style="position:relative;width:36px;height:41px;margin:0 auto;left:-0.5px"><div class="abs" style="left:1.5px;top:0;width:34px;height:21px;background:#2c3e50;border-radius:3px;color:#fff;font-size:11px;font-weight:bold;line-height:20px;text-align:center">操作</div><div class="abs" style="left:0;top:21px;width:26px;height:20px;background:#2c3e50;border-radius:0 0 3px 3px"><svg class="abs" style="left:9.6px;top:9.3px" width="8" height="4.2" viewBox="0 0 7 4"><path d="M0 0h7L3.5 4z" fill="#fff"/></svg></div></div></td><td style="padding:0">R2025093004011009</td><td style="padding:0">111222333</td><td>eqfqeeqf</td><td>Lv 1</td><td>111.00</td><td style="padding:0"></td><td>0.00</td><td>0.000</td><td style="padding:0">111111111111</td><td style="padding:0">2EFEF</td><td style="padding:0"><span class="lab lg">待审核</span></td><td style="text-align:left">2025-09-30 04:01:10</td></tr>
<tr class="r58"><td style="padding:0"><span class="cb"></span></td><td>eqfqeeqf</td><td style="padding:0"><div style="position:relative;width:36px;height:41px;margin:0 auto;left:-0.5px"><div class="abs" style="left:1.5px;top:0;width:34px;height:21px;background:#2c3e50;border-radius:3px;color:#fff;font-size:11px;font-weight:bold;line-height:20px;text-align:center">操作</div><div class="abs" style="left:0;top:21px;width:26px;height:20px;background:#2c3e50;border-radius:0 0 3px 3px"><svg class="abs" style="left:9.6px;top:9.3px" width="8" height="4.2" viewBox="0 0 7 4"><path d="M0 0h7L3.5 4z" fill="#fff"/></svg></div></div></td><td style="padding:0">R2025093004003134</td><td style="padding:0">111222333</td><td>eqfqeeqf</td><td>Lv 1</td><td>1111.00</td><td style="padding:0"></td><td>0.00</td><td>0.000</td><td style="padding:0">111111111111</td><td style="padding:0">EFEFE</td><td style="padding:0"><span class="lab lg">待审核</span></td><td style="text-align:left">2025-09-30 04:00:31</td></tr>
<tr class="r58 o"><td style="padding:0"><span class="cb"></span></td><td>eqfqeeqf</td><td style="padding:0"><div style="position:relative;width:36px;height:41px;margin:0 auto;left:-0.5px"><div class="abs" style="left:1.5px;top:0;width:34px;height:21px;background:#2c3e50;border-radius:3px;color:#fff;font-size:11px;font-weight:bold;line-height:20px;text-align:center">操作</div><div class="abs" style="left:0;top:21px;width:26px;height:20px;background:#2c3e50;border-radius:0 0 3px 3px"><svg class="abs" style="left:9.6px;top:9.3px" width="8" height="4.2" viewBox="0 0 7 4"><path d="M0 0h7L3.5 4z" fill="#fff"/></svg></div></div></td><td style="padding:0">R2025093003498008</td><td style="padding:0">147258369</td><td>eqfqeeqf</td><td>Lv 1</td><td>222222.00</td><td style="padding:0"></td><td>0.00</td><td>0.000</td><td style="padding:0">111111111111</td><td style="padding:0">hjbhjbhj</td><td style="padding:0"><span class="lab lg">待审核</span></td><td style="text-align:left">2025-09-30 03:49:08</td></tr>
<tr class="r35"><td style="padding:0"><span class="cb"></span></td><td>eqfqeeqf</td><td style="padding:0"></td><td style="padding:0">R2025093003402266</td><td style="padding:0">1241435</td><td>eqfqeeqf</td><td>Lv 1</td><td>12312.00</td><td style="padding:0"></td><td>12312.00</td><td>0.000</td><td style="padding:0">111111111111</td><td style="padding:0"></td><td style="padding:0"><span class="lab lo">充值成功</span></td><td style="text-align:left">2025-09-30 03:40:22</td></tr>
<tr class="r35 o"><td style="padding:0"><span class="cb"></span></td><td>eqfqeeqf</td><td style="padding:0"></td><td style="padding:0">R2025093003397444</td><td style="padding:0">1241435</td><td>eqfqeeqf</td><td>Lv 1</td><td>1321.00</td><td style="padding:0"></td><td>1321.00</td><td>0.000</td><td style="padding:0">213123</td><td style="padding:0"></td><td style="padding:0"><span class="lab lo">充值成功</span></td><td style="text-align:left">2025-09-30 03:39:44</td></tr>
<tr class="r35"><td style="padding:0"><span class="cb"></span></td><td>eqfqeeqf</td><td style="padding:0"></td><td style="padding:0">R2025093003384755</td><td style="padding:0">123123456456</td><td>eqfqeeqf</td><td>Lv 1</td><td>20000.00</td><td style="padding:0"></td><td>20000.00</td><td>0.000</td><td style="padding:0">111111111111</td><td style="padding:0"></td><td style="padding:0"><span class="lab lo">充值成功</span></td><td style="text-align:left">2025-09-30 03:38:47</td></tr>
<tr class="r35 o"><td style="padding:0"><span class="cb"></span></td><td>eqfqeeqf</td><td style="padding:0"></td><td style="padding:0">R2025093003383565</td><td style="padding:0">123123456456</td><td>eqfqeeqf</td><td>Lv 1</td><td>20000.00</td><td style="padding:0"></td><td>20000.00</td><td>0.000</td><td style="padding:0">111111111111</td><td style="padding:0"></td><td style="padding:0"><span class="lab lo">充值成功</span></td><td style="text-align:left">2025-09-30 03:38:35</td></tr>
<tr class="r35"><td style="padding:0"><span class="cb"></span></td><td>eqfqeeqf</td><td style="padding:0"></td><td style="padding:0">R2025093003359102</td><td style="padding:0">1241435</td><td>eqfqeeqf</td><td>Lv 1</td><td>31231.00</td><td style="padding:0"></td><td>31231.00</td><td>0.000</td><td style="padding:0">213123</td><td style="padding:0"></td><td style="padding:0"><span class="lab lo">充值成功</span></td><td style="text-align:left">2025-09-30 03:35:10</td></tr>
</tbody></table></div>
<div class="abs" style="left:258px;top:694.5px;width:1191px;height:15.5px;background:#fafafa"></div>
<div class="abs" style="left:276px;top:698px;width:920px;height:9px;background:#8c8c8c;border-radius:4.5px"></div>
<svg class="abs" style="left:262.3px;top:697.8px" width="5.5" height="9.6" viewBox="0 0 5 8"><path d="M5 0v8L0 4z" fill="#606060"/></svg>
<svg class="abs" style="left:1437.5px;top:697.8px" width="5.5" height="9.6" viewBox="0 0 5 8"><path d="M0 0v8L5 4z" fill="#606060"/></svg>
<div class="t" style="left:258px;top:727px;font-size:13px;color:#333;line-height:18px">显示第 1 到第 10 条记录，总共 27 条记录 每页显示</div>
<div class="abs" style="left:558.4px;top:722.4px;width:50.2px;height:29.6px;border:1px solid #ddd;background:#f4f4f4;border-radius:3px"></div>
<div class="t" style="left:571.5px;top:729px;font-size:12px;color:#444;line-height:16px">10</div>
<svg class="abs" style="left:587.5px;top:735.5px" width="7" height="4" viewBox="0 0 7 4"><path d="M0 4h7L3.5 0z" fill="#333"/></svg>
<div class="t" style="left:613.3px;top:727px;font-size:13px;color:#333;line-height:18px">条记录</div>
<div class="pg" style="left:1113.2px;width:64.8px;border-radius:3px 0 0 3px;">上一页</div>
<div class="pg" style="left:1177.0px;width:34.0px;background:#2c3e50;border-color:#2c3e50;color:#fff;z-index:2;">1</div>
<div class="pg" style="left:1210.0px;width:33.0px;">2</div>
<div class="pg" style="left:1242.0px;width:33.0px;">3</div>
<div class="pg" style="left:1274.0px;width:65.0px;border-radius:0 3px 3px 0;">下一页</div>
<div class="abs" style="left:1344px;top:720px;width:49.5px;height:31px;border:1px solid #d2d6de;background:#fff"></div>
<div class="abs" style="left:1399px;top:721.4px;width:49.8px;height:30px;border:1px solid #ddd;background:#f4f4f4;border-radius:3px;font-size:12px;color:#444;text-align:center;line-height:28px">跳转</div>
<svg class="abs" style="left:0;top:0;mix-blend-mode:multiply;font-family:'Liberation Sans','Noto Sans CJK SC',sans-serif" width="1470" height="880" viewBox="0 0 1470 880" fill="#ff0000">
<circle cx="736.4" cy="440.7" r="139.5" fill="none" stroke="#ff0000" stroke-width="5"/>
<text font-size="24"  x="632.2 628.1 632.4 647.4 665.2 690.4 719.2 750.0 776.9 806.8 825.3 838.7 844.5" y="470.2 440.3 410.5 379.4 359.2 342.8 333.9 333.4 340.2 358.8 379.1 405.4 433.2" rotate="258.3 274.3 290.3 306.4 322.4 338.4 354.4 370.4 386.4 402.5 418.5 434.5 450.5"><tspan font-weight="bold" stroke="#ff0000" stroke-width=".9" font-size="20">www</tspan>.515y<tspan font-weight="bold" stroke="#ff0000" stroke-width=".9" font-size="19">m</tspan>.co<tspan font-weight="bold" stroke="#ff0000" stroke-width=".9" font-size="19">m</tspan></text>
<text font-size="12" font-style="italic" x="672.4 686.0 700.2 715.2 729.3 746.6 760.3 774.6 788.2" y="553.9 560.6 565.6 569.0 570.6 570.3 568.5 565.0 560.0" rotate="28.0 21.3 14.7 8.0 1.4 -5.2 -11.9 -18.6 -25.2">515y<tspan  font-size="9.5">m</tspan>.co<tspan  font-size="9.5">m</tspan></text>
<text x="662" y="453.4" font-size="38" letter-spacing="1" stroke="#ff0000" stroke-width=".4" style="font-family:'Liberation Sans',sans-serif">515</text>
<text transform="translate(731.5 454) skewX(-9)" x="0" y="0" font-size="35.5" font-weight="bold" letter-spacing="3.5" style="font-family:'Noto Serif CJK SC','Noto Sans CJK SC',serif">源码</text>
<text y="520.2" font-size="28" font-weight="bold" style="font-family:'Liberation Sans',sans-serif" x="660.4 678.1 694.3 711.5 727.2 746.7 762.8 779.6 796.8">515y<tspan textLength="17.9" lengthAdjust="spacingAndGlyphs">m</tspan>.co<tspan textLength="17.5" lengthAdjust="spacingAndGlyphs">m</tspan></text>
</svg>
</body></html>
